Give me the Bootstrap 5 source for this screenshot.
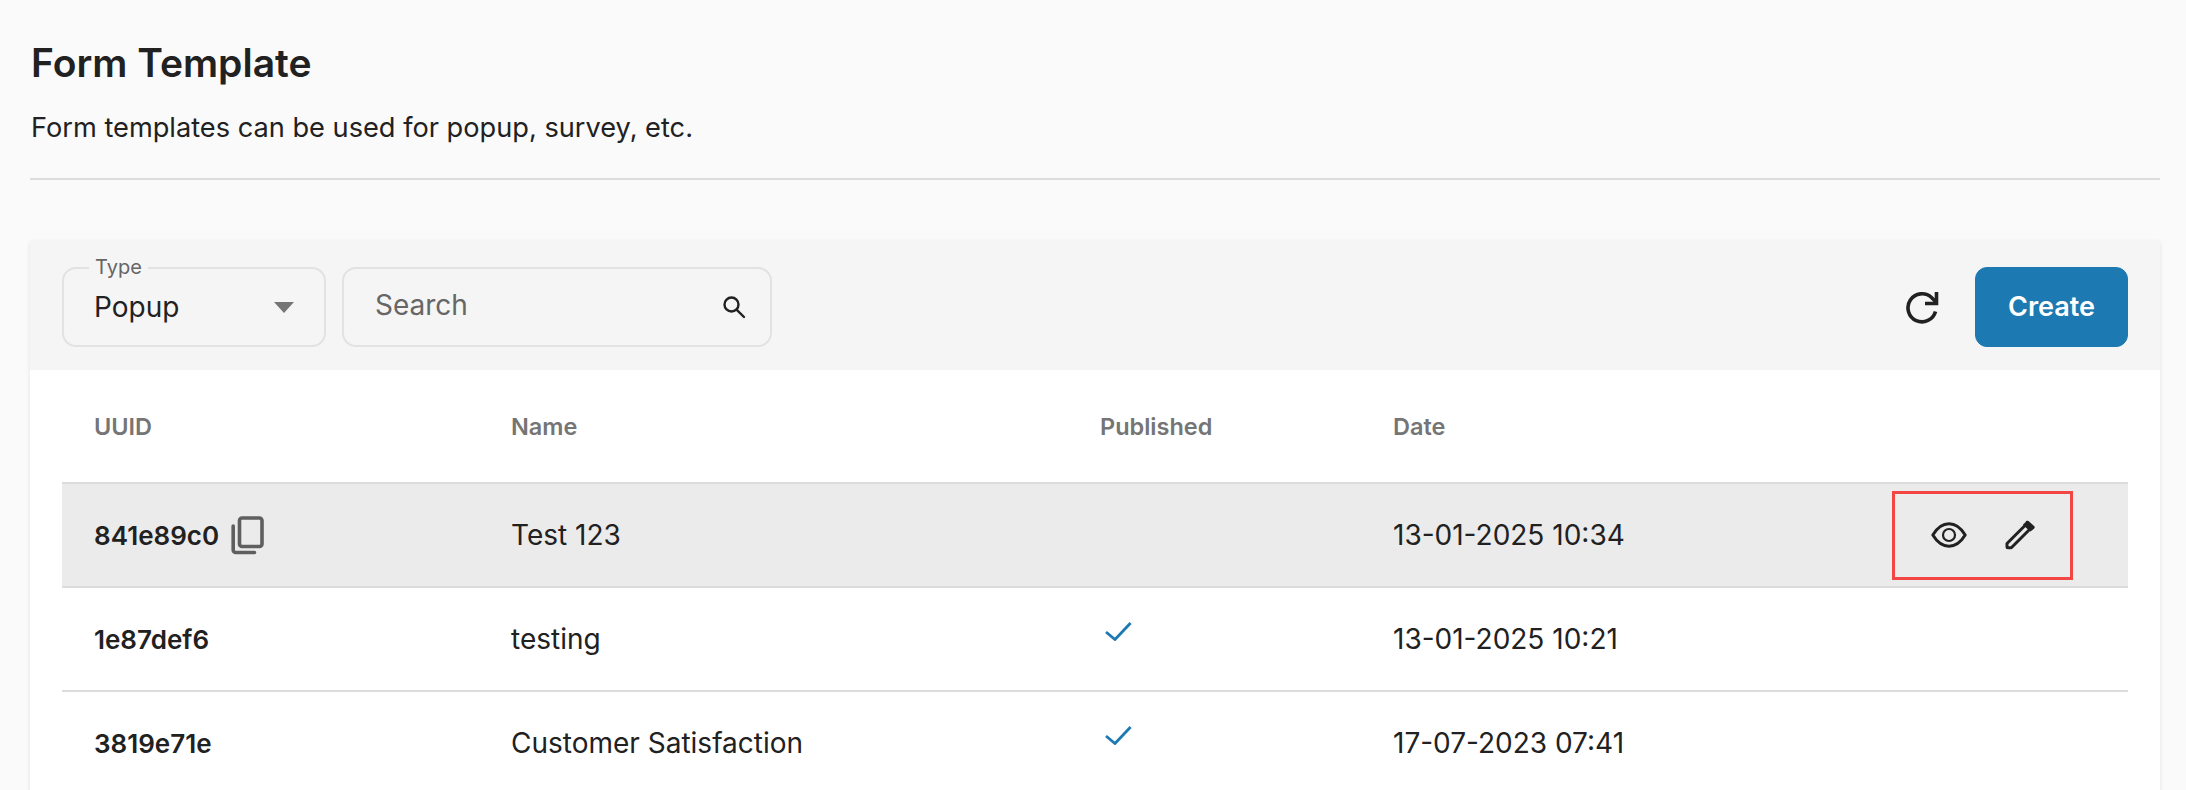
<!DOCTYPE html>
<html lang="en">
<head>
  <meta charset="UTF-8" />
  <meta name="viewport" content="width=device-width, initial-scale=1" />
  <title>Form Template</title>
  <link href="https://cdn.jsdelivr.net/npm/bootstrap@5.3.0/dist/css/bootstrap.min.css" rel="stylesheet" />
  <style>
    html, body { height: 790px; overflow: hidden; }
    body { background: #fafafa; color: #212121; font-family: "Inter", "Liberation Sans", sans-serif; }
    .page-wrap { padding: 40px 26px 0 30px; }
    .page-title { font-size: 39px; font-weight: 600; line-height: 46px; margin: 0 0 0 1px; }
    .page-sub { font-size: 27.2px; line-height: 34px; margin: 25px 0 0 1px; }
    .page-rule { height: 2px; background: #dcdcdc; margin: 33px 0 61px; }
    .tpl-card { background: #fff; box-shadow: 0 1px 4px rgba(0,0,0,.1); }
    .tpl-toolbar { background: #f5f5f5; height: 129px; padding: 26px 32px 0; }
    .type-field { position: relative; width: 264px; height: 80px; border: 2px solid #e2e2e2; border-radius: 14px; padding: 0 30px; font-size: 28px; }
    .type-label { position: absolute; left: 25px; top: -15px; background: #f5f5f5; padding: 0 6px; font-size: 20px; line-height: 26px; color: #666; }
    .type-caret { width: 0; height: 0; border-left: 10px solid transparent; border-right: 10px solid transparent; border-top: 11px solid #757575; }
    .search-field { width: 430px; height: 80px; border: 2px solid #e2e2e2; border-radius: 14px; padding: 0 23px 0 31px; }
    .search-field .form-control { background: transparent; border: 0; padding: 0 0 5px; font-size: 28px; box-shadow: none; color: #212121; }
    .search-field .form-control::placeholder { color: #666; }
    .tool-actions { height: 80px; gap: 35px; }
    .btn-create { width: 153px; height: 80px; background: #1c79b1; border-color: #1c79b1; color: #fff; font-size: 27px; font-weight: 600; border-radius: 12px; }
    .tpl-table-wrap { padding: 0 32px; }
    .tpl-table { table-layout: fixed; margin: 0; font-size: 28px; color: #212121; }
    .tpl-table th { height: 113px; padding: 1px 0 0 32px; font-size: 23.5px; font-weight: 600; color: #757575; vertical-align: middle; border-bottom: 2px solid #dcdcdc; }
    .tpl-table td { height: 104px; padding: 0 0 0 32px; vertical-align: middle; border-bottom: 2px solid #dcdcdc; background: transparent; color: inherit; box-shadow: none; }
    .tpl-table tr.row-hover td { background: #ebebeb; }
    .tpl-table td.uuid-cell { font-weight: 600; font-size: 26px; }
    .copy-wrap { gap: 12px; }
    .action-box { width: 181px; height: 89px; border: 3px solid #f44545; padding: 0 35px 0 36px; margin-left: 499px; }
    .action-cell { overflow: visible; white-space: nowrap; }
    .check-mark { display: block; margin: 0 0 16px 5px; }
  </style>
</head>
<body>
  <div class="page-wrap">
    <h1 class="page-title">Form Template</h1>
    <p class="page-sub">Form templates can be used for popup, survey, etc.</p>
    <div class="page-rule"></div>

    <div class="tpl-card">
      <div class="tpl-toolbar d-flex align-items-start">
        <div class="type-field d-flex align-items-center justify-content-between">
          <span class="type-label">Type</span>
          <span>Popup</span>
          <span class="type-caret"></span>
        </div>
        <div class="search-field d-flex align-items-center ms-3">
          <input class="form-control" type="text" placeholder="Search" />
          <svg class="flex-shrink-0" width="26" height="26" viewBox="0 0 26 26" fill="none" stroke="#212121" stroke-width="2.4" stroke-linecap="round">
            <circle cx="10.5" cy="10.5" r="7" />
            <path d="M15.8 15.8 L23 23" />
          </svg>
        </div>
        <div class="tool-actions ms-auto d-flex align-items-center">
          <svg width="36" height="36" viewBox="0 0 36 36" fill="none" stroke="#212121" stroke-width="3.6">
            <path d="M31.5 22.5 A14 14 0 1 1 27.5 8.5 L32 13" />
            <path d="M32.5 3 V14.5 H21" stroke-linejoin="miter" />
          </svg>
          <button class="btn btn-create" type="button">Create</button>
        </div>
      </div>

      <div class="tpl-table-wrap">
        <table class="table tpl-table">
          <colgroup>
            <col style="width: 417px" />
            <col style="width: 589px" />
            <col style="width: 293px" />
            <col />
          </colgroup>
          <thead>
            <tr><th>UUID</th><th>Name</th><th>Published</th><th>Date</th></tr>
          </thead>
          <tbody>
            <tr class="row-hover">
              <td class="uuid-cell">
                <span class="copy-wrap d-inline-flex align-items-center">841e89c0
                  <svg width="33" height="39" viewBox="0 0 33 39" fill="none" stroke="#5f5f5f" stroke-width="3.6" stroke-linecap="round" stroke-linejoin="round">
                    <rect x="8.5" y="2" width="22.5" height="28.5" rx="2.5" />
                    <path d="M2.2 10 V34 A2.5 2.5 0 0 0 4.7 36.5 H23.5" />
                  </svg>
                </span>
              </td>
              <td>Test 123</td>
              <td></td>
              <td class="action-cell">
                <div class="d-flex align-items-center">
                  <span style="width: 0">13-01-2025 10:34</span>
                  <div class="action-box d-flex align-items-center justify-content-between flex-shrink-0">
                    <svg width="36" height="26" viewBox="0 0 36 26" fill="none" stroke="#212121" stroke-linejoin="round">
                      <path d="M1.8 13 C7 4.5 12 1.8 18 1.8 C24 1.8 29 4.5 34.2 13 C29 21.5 24 24.2 18 24.2 C12 24.2 7 21.5 1.8 13 Z" stroke-width="3" />
                      <circle cx="18" cy="13" r="6" stroke-width="2.2" />
                    </svg>
                    <svg width="30" height="30" viewBox="0 0 30 30" fill="none">
                      <path d="M2 23.5 L20.5 5 L24.8 9.3 L6.3 27.8 H3 A1 1 0 0 1 2 26.8 Z" stroke="#212121" stroke-width="3" stroke-linejoin="round" />
                      <path d="M20.5 2.2 A2 2 0 0 1 23.5 1 L28.8 5.8 A2 2 0 0 1 29 8.8 L25.5 11.5 L18 4.5 Z" fill="#212121" />
                    </svg>
                  </div>
                </div>
              </td>
            </tr>
            <tr>
              <td class="uuid-cell">1e87def6</td>
              <td>testing</td>
              <td>
                <svg class="check-mark" width="27" height="19" viewBox="0 0 27 19" fill="none" stroke="#1c79b1" stroke-width="2.8">
                  <path d="M1 10 L10 17.5 L25.6 1" />
                </svg>
              </td>
              <td>13-01-2025 10:21</td>
            </tr>
            <tr>
              <td class="uuid-cell">3819e71e</td>
              <td>Customer Satisfaction</td>
              <td>
                <svg class="check-mark" width="27" height="19" viewBox="0 0 27 19" fill="none" stroke="#1c79b1" stroke-width="2.8">
                  <path d="M1 10 L10 17.5 L25.6 1" />
                </svg>
              </td>
              <td>17-07-2023 07:41</td>
            </tr>
          </tbody>
        </table>
      </div>
    </div>
  </div>
</body>
</html>
